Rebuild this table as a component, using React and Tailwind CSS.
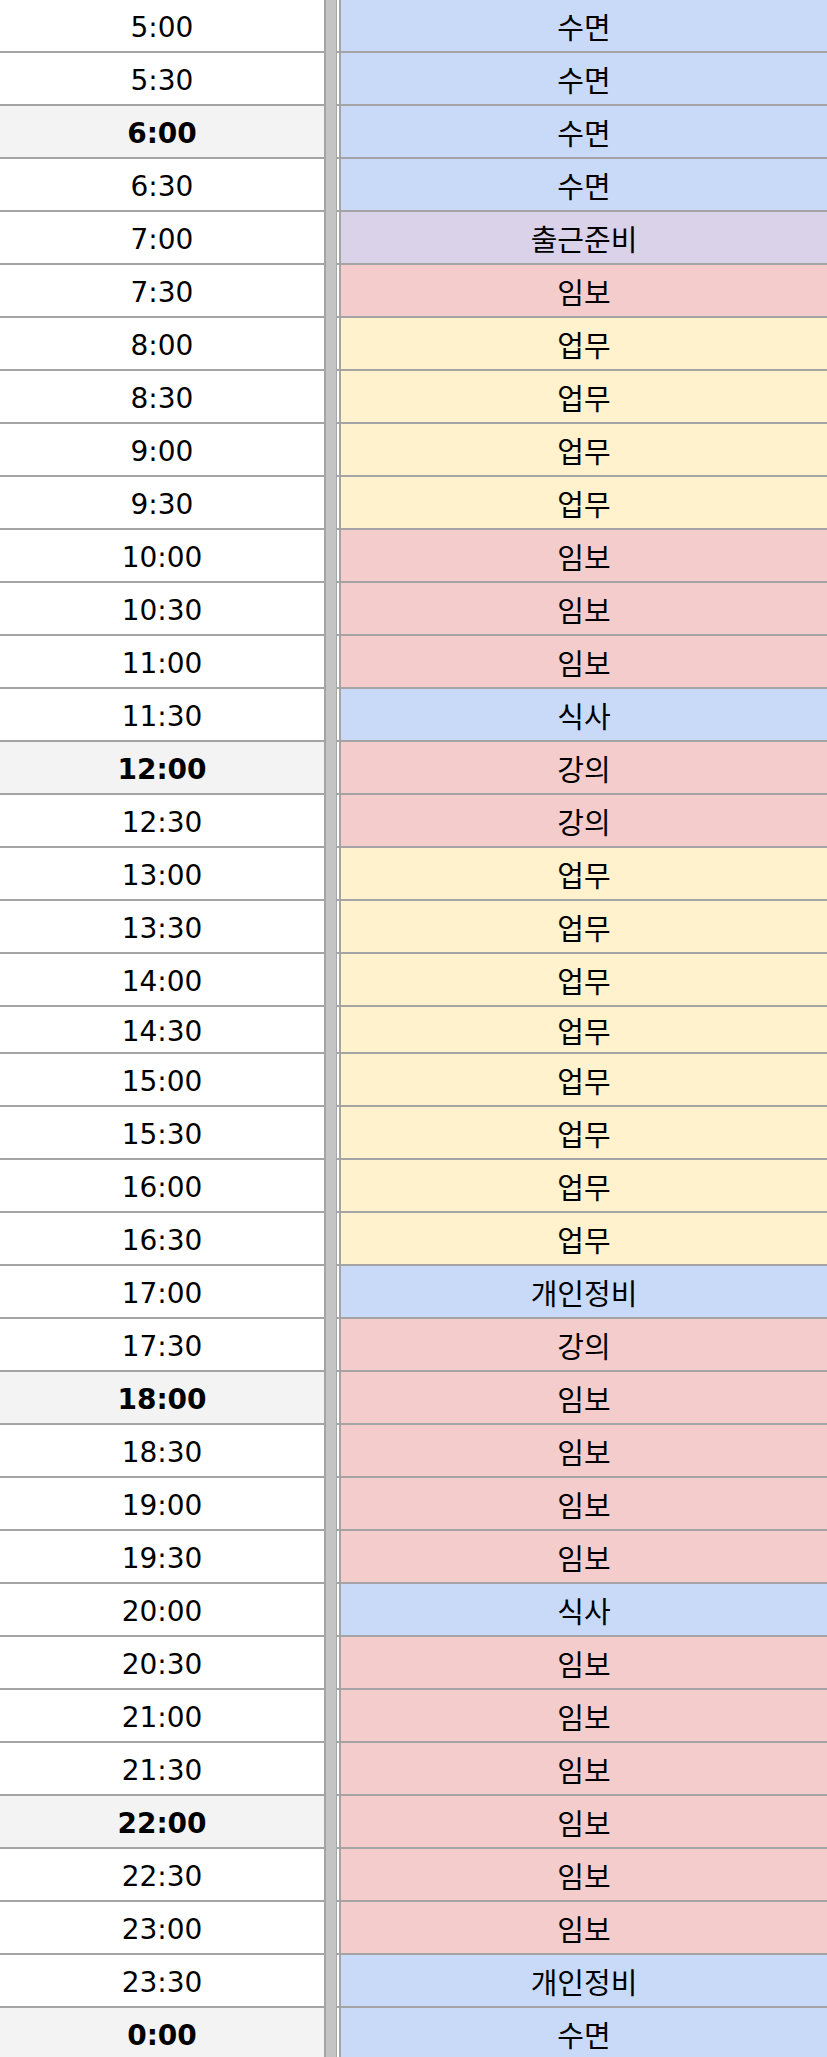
const BLUE = "bg-[#c9daf8]";
const PURPLE = "bg-[#d9d2e9]";
const RED = "bg-[#f4cccc]";
const YELLOW = "bg-[#fff2cc]";

const rows = [
  ["5:00", "수면", BLUE],
  ["5:30", "수면", BLUE],
  ["6:00", "수면", BLUE, true],
  ["6:30", "수면", BLUE],
  ["7:00", "출근준비", PURPLE],
  ["7:30", "임보", RED],
  ["8:00", "업무", YELLOW],
  ["8:30", "업무", YELLOW],
  ["9:00", "업무", YELLOW],
  ["9:30", "업무", YELLOW],
  ["10:00", "임보", RED],
  ["10:30", "임보", RED],
  ["11:00", "임보", RED],
  ["11:30", "식사", BLUE],
  ["12:00", "강의", RED, true],
  ["12:30", "강의", RED],
  ["13:00", "업무", YELLOW],
  ["13:30", "업무", YELLOW],
  ["14:00", "업무", YELLOW],
  ["14:30", "업무", YELLOW, false, true],
  ["15:00", "업무", YELLOW],
  ["15:30", "업무", YELLOW],
  ["16:00", "업무", YELLOW],
  ["16:30", "업무", YELLOW],
  ["17:00", "개인정비", BLUE],
  ["17:30", "강의", RED],
  ["18:00", "임보", RED, true],
  ["18:30", "임보", RED],
  ["19:00", "임보", RED],
  ["19:30", "임보", RED],
  ["20:00", "식사", BLUE],
  ["20:30", "임보", RED],
  ["21:00", "임보", RED],
  ["21:30", "임보", RED],
  ["22:00", "임보", RED, true],
  ["22:30", "임보", RED],
  ["23:00", "임보", RED],
  ["23:30", "개인정비", BLUE],
  ["0:00", "수면", BLUE, true],
];

function Row({ time, label, color, bold, short }) {
  return (
    <div className={`flex ${short ? "h-[47px]" : "h-[53px]"}`}>
      {/* 시간 칸 */}
      <div
        className={`w-[326px] flex items-center justify-center border-r-2 border-b-2 border-[#a4a4a4] pt-[4px] text-[28px] font-['DejaVu_Sans',sans-serif] ${
          bold ? "bg-[#f3f3f3] font-bold" : "bg-white"
        }`}
      >
        {time}
      </div>
      {/* 고정 구분선 */}
      <div className="w-[10px] bg-[#c4c4c4]" />
      <div className="w-[1px] bg-[#a8a8a8]" />
      <div className="w-[2px] bg-white border-b-2 border-[#a4a4a4]" />
      <div
        className={`flex-1 flex items-center justify-center border-l-2 border-b-2 border-[#a4a4a4] pt-[2px] text-[29px] ${color}`}
      >
        {label}
      </div>
    </div>
  );
}

export default function App() {
  return (
    <div className="w-[827px] h-[2057px] overflow-hidden bg-white text-black font-['Noto_Sans_CJK_KR',sans-serif]">
      {rows.map(([time, label, color, bold, short]) => (
        <Row key={time} time={time} label={label} color={color} bold={bold} short={short} />
      ))}
    </div>
  );
}
